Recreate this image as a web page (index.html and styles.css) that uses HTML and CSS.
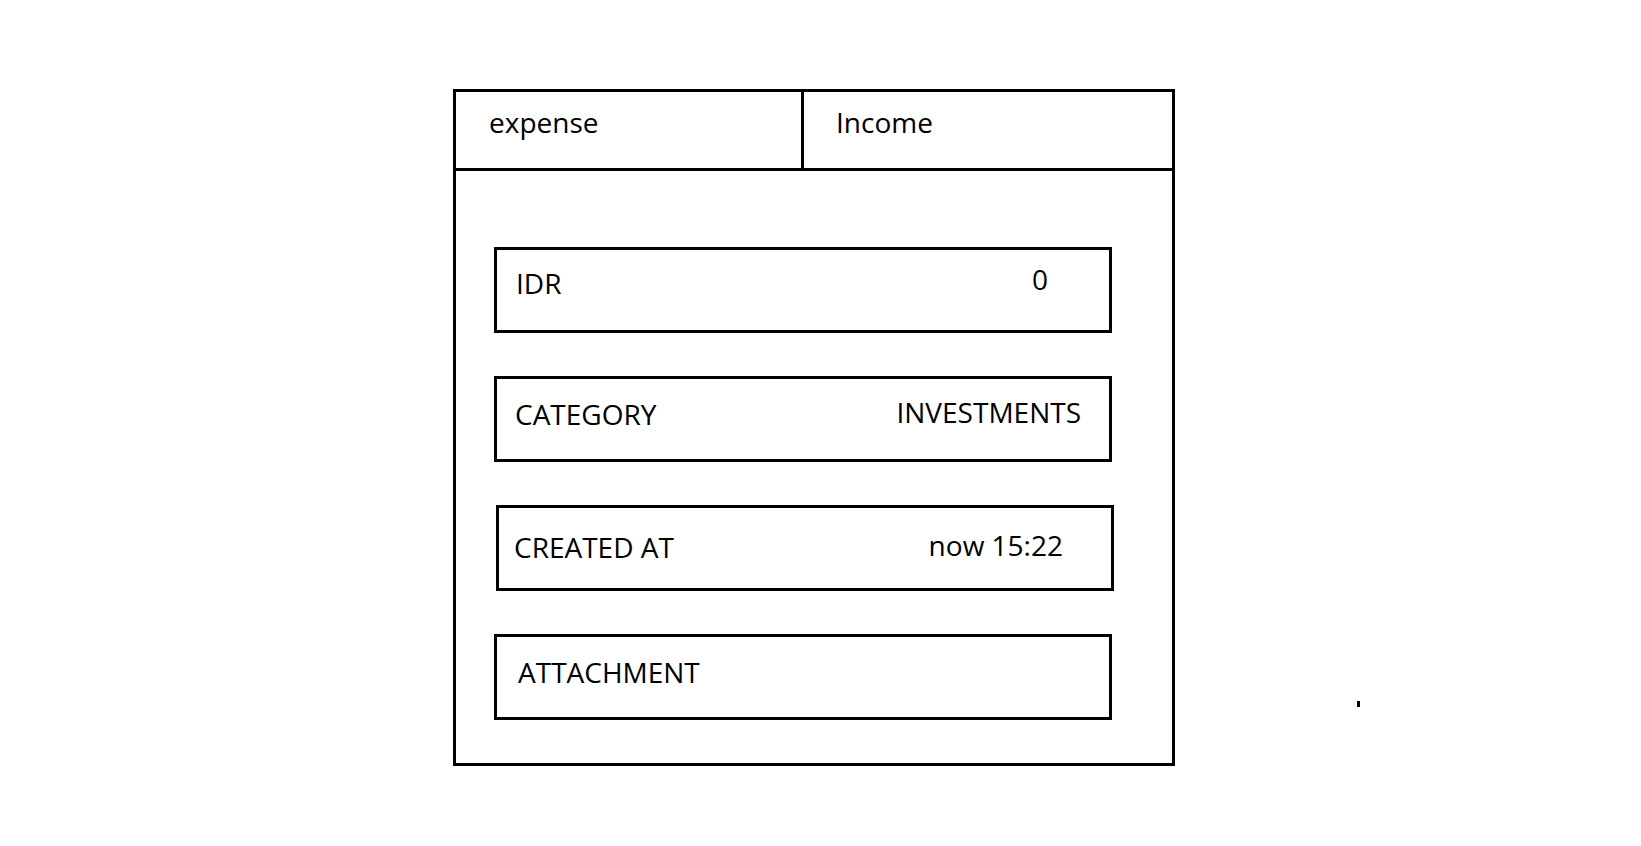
FILE: index.html
```html
<!DOCTYPE html>
<html lang="en">

<head>
  <title>new transaction</title>
  <meta name="viewport" content="width=device-width, initial-scale=1" />
  <meta charset="UTF-8" />
  <link rel="stylesheet" href="styles.css">
</head>

<body>
  <div class="page">
    <div class="card">
      <div class="tabs">
        <div class="tab tab-first">expense</div>
        <div class="tab">Income</div>
      </div>
      <div class="fields">
        <div class="field field-amount">
          <span class="label">IDR</span>
          <span class="value">0</span>
        </div>
        <div class="field field-category">
          <span class="label">CATEGORY</span>
          <span class="value">INVESTMENTS</span>
        </div>
        <div class="field field-date">
          <span class="label">CREATED AT</span>
          <span class="value">now 15:22</span>
        </div>
        <div class="field field-file">
          <span class="label">ATTACHMENT</span>
        </div>
      </div>
    </div>
    <span class="stray"></span>
  </div>
</body>

</html>
```

FILE: styles.css
```css
body {
  margin: 0;
  background-color: #fff;
  color: #000;
  font-family: 'Open Sans', sans-serif;
  font-size: 28px;
}

.page {
  padding: 89px 0 0 453px;
}

.card {
  box-sizing: border-box;
  width: 722px;
  height: 677px;
  border: 3px solid #000;
}

.tabs {
  box-sizing: border-box;
  height: 79px;
  display: flex;
  border-bottom: 3px solid #000;
}

.tab {
  display: flex;
  align-items: center;
  padding: 0 0 16px 32px;
  line-height: 38px;
}

.tab-first {
  box-sizing: border-box;
  width: 348px;
  padding-left: 33px;
  border-right: 3px solid #000;
}

.fields {
  display: flex;
  flex-direction: column;
  gap: 43px;
  padding: 76px 0 0 38px;
}

.field {
  box-sizing: border-box;
  width: 618px;
  height: 86px;
  display: flex;
  align-items: center;
  justify-content: space-between;
  border: 3px solid #000;
  padding: 0 28px 0 18px;
  line-height: 38px;
}

.value {
  margin-bottom: 4px;
}

.field-amount {
  padding-bottom: 15px;
  padding-left: 19px;
  padding-right: 61px;
}

.field-amount .value {
  margin-bottom: 8px;
}

.field-category {
  padding-bottom: 10px;
}

.field-date {
  padding-bottom: 3px;
  padding-left: 15px;
  padding-right: 48px;
  margin-left: 2px;
}

.field-file {
  padding-bottom: 11px;
  padding-left: 21px;
}

/* pen slip on the sketch */
.stray {
  position: absolute;
  left: 1357px;
  top: 701px;
  width: 3px;
  height: 6px;
  background-color: #000;
}
```
